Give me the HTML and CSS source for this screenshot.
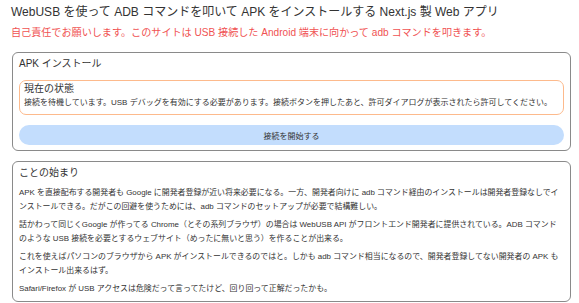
FILE: index.html
```html
<!DOCTYPE html>
<html lang="ja">
<head>
  <meta charset="UTF-8">
  <meta name="viewport" content="width=device-width, initial-scale=1.0">
  <title>APK Installer</title>
  <link rel="stylesheet" href="styles.css">
</head>
<body>
  <main class="page">
    <h1 class="title">WebUSB を使って ADB コマンドを叩いて APK をインストールする Next.js 製 Web アプリ</h1>
    <p class="warning">自己責任でお願いします。このサイトは USB 接続した Android 端末に向かって adb コマンドを叩きます。</p>

    <section class="card">
      <h2 class="card-title">APK インストール</h2>
      <div class="status">
        <h3 class="status-title">現在の状態</h3>
        <p class="status-text">接続を待機しています。USB デバッグを有効にする必要があります。接続ボタンを押したあと、許可ダイアログが表示されたら許可してください。</p>
      </div>
      <button class="connect">接続を開始する</button>
    </section>

    <section class="card">
      <h2 class="card-title">ことの始まり</h2>
      <p class="story">APK を直接配布する開発者も Google に開発者登録が近い将来必要になる。一方、開発者向けに adb コマンド経由のインストールは開発者登録なしでインストールできる。だがこの回避を使うためには、adb コマンドのセットアップが必要で結構難しい。</p>
      <p class="story">話かわって同じくGoogle が作ってる Chrome（とその系列ブラウザ）の場合は WebUSB API がフロントエンド開発者に提供されている。ADB コマンドのような USB 接続を必要とするウェブサイト（めったに無いと思う）を作ることが出来る。</p>
      <p class="story">これを使えばパソコンのブラウザから APK がインストールできるのではと。しかも adb コマンド相当になるので、開発者登録してない開発者の APK もインストール出来るはず。</p>
      <p class="story">Safari/Firefox が USB アクセスは危険だって言ってたけど、回り回って正解だったかも。</p>
    </section>
  </main>
</body>
</html>
```

FILE: styles.css
```css
body {
  font-family: "Liberation Sans", "Noto Sans CJK JP", sans-serif;
  margin: 0;
  padding: 0;
  background-color: #ffffff;
  color: #333;
}

.page {
  padding: 4px 8px 0 12px;
}

.title {
  font-size: 12px;
  font-weight: normal;
  margin: 0 0 0 -1px;
  line-height: 16px;
}

.warning {
  font-size: 10.1px;
  color: #f05252;
  margin: 5px 0 11px -1px;
  line-height: 16px;
}

.card {
  border: 1px solid #8a8a8a;
  border-radius: 6px;
  padding: 4px 6px 5px 6px;
  margin-bottom: 10px;
}

.card-title {
  font-size: 10px;
  font-weight: normal;
  margin: 0 0 6px 0;
  line-height: 14px;
}

.status {
  border: 1px solid #fdba8c;
  border-radius: 7px;
  margin-top: 9px;
  padding: 1px 5px 4px 4px;
}

.status-title {
  font-size: 10px;
  font-weight: normal;
  margin: 0;
  line-height: 14px;
}

.status-text {
  font-size: 8px;
  margin: 0;
  line-height: 14px;
}

.connect {
  display: block;
  width: 100%;
  margin-top: 10px;
  height: 20px;
  border: none;
  border-radius: 10px;
  background-color: #c3ddfd;
  color: #333;
  font-family: inherit;
  font-size: 8px;
  cursor: pointer;
}

.story {
  font-size: 7.92px;
  line-height: 14px;
  margin: 0 0 4px 0;
}

.story:last-child {
  margin-bottom: 0;
}
```
